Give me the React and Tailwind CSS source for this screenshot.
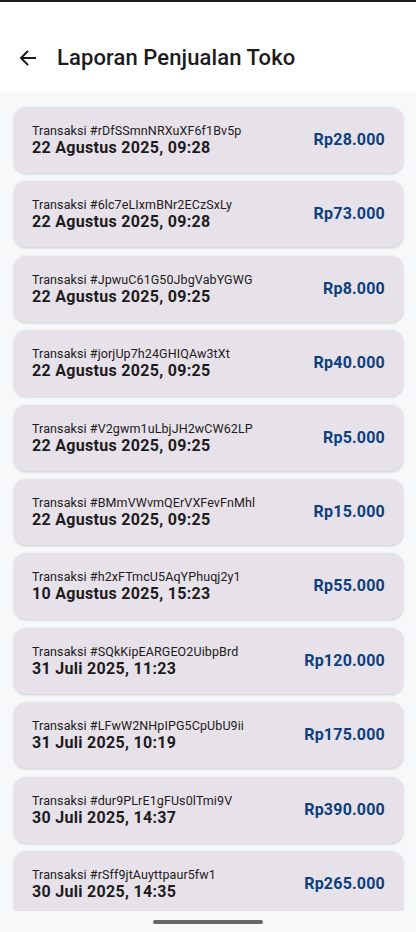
import React from 'react';

const rows = [
  { id: 'rDfSSmnNRXuXF6f1Bv5p', date: '22 Agustus 2025, 09:28', amount: 'Rp28.000' },
  { id: '6lc7eLIxmBNr2ECzSxLy', date: '22 Agustus 2025, 09:28', amount: 'Rp73.000' },
  { id: 'JpwuC61G50JbgVabYGWG', date: '22 Agustus 2025, 09:25', amount: 'Rp8.000' },
  { id: 'jorjUp7h24GHIQAw3tXt', date: '22 Agustus 2025, 09:25', amount: 'Rp40.000' },
  { id: 'V2gwm1uLbjJH2wCW62LP', date: '22 Agustus 2025, 09:25', amount: 'Rp5.000' },
  { id: 'BMmVWvmQErVXFevFnMhl', date: '22 Agustus 2025, 09:25', amount: 'Rp15.000' },
  { id: 'h2xFTmcU5AqYPhuqj2y1', date: '10 Agustus 2025, 15:23', amount: 'Rp55.000' },
  { id: 'SQkKipEARGEO2UibpBrd', date: '31 Juli 2025, 11:23', amount: 'Rp120.000' },
  { id: 'LFwW2NHpIPG5CpUbU9ii', date: '31 Juli 2025, 10:19', amount: 'Rp175.000' },
  { id: 'dur9PLrE1gFUs0lTmi9V', date: '30 Juli 2025, 14:37', amount: 'Rp390.000' },
  { id: 'rSff9jtAuyttpaur5fw1', date: '30 Juli 2025, 14:35', amount: 'Rp265.000' },
];

export default function App() {
  return (
    <div className="w-[416px] h-[932px] flex flex-col bg-[#f7f8fa] overflow-hidden text-[#1d1b20]" style={{ fontFamily: 'Roboto, "Noto Sans", sans-serif' }}>
      {/* Header */}
      <div className="bg-white border-t-2 border-[#1d1b20] h-[91px] shrink-0 flex items-end pb-[19px]">
        <button className="ml-[16px] w-[24px] h-[24px] flex items-center justify-center mb-[2px]">
          <svg width="24" height="24" viewBox="0 0 24 24" fill="none" stroke="#1d1b20" strokeWidth="2">
            <path d="M20 12H5.5" />
            <path d="M11.5 5.5L5 12l6.5 6.5" strokeLinecap="round" strokeLinejoin="round" />
          </svg>
        </button>
        <h1 className="ml-[17px] text-[22px] font-medium leading-[28px] tracking-[0.1px]">Laporan Penjualan Toko</h1>
      </div>

      {/* List */}
      <div className="flex-1 overflow-hidden pl-[14px] pr-[13px] pt-[16px] flex flex-col gap-[8.4px]">
        {rows.map((r) => (
          <div
            key={r.id}
            className="h-[66px] shrink-0 rounded-[12px] bg-[#e7e1e9] shadow-[0_1px_3px_rgba(0,0,0,0.18)] flex items-center justify-between pl-[18px] pr-[18px]"
          >
            <div className="flex flex-col pt-[1px]">
              <span className="text-[12.5px] leading-[15px] tracking-[0.1px]">Transaksi #{r.id}</span>
              <span className="text-[16px] leading-[20px] font-bold tracking-[0.3px]">{r.date}</span>
            </div>
            <span className="text-[16px] font-bold text-[#0d3f7c] tracking-[0.2px]">{r.amount}</span>
          </div>
        ))}
      </div>

      {/* Nav bar */}
      <div className="h-[21px] shrink-0 flex items-center justify-center">
        <div className="w-[110px] h-[4px] rounded-full bg-[#666666]" />
      </div>
    </div>
  );
}
